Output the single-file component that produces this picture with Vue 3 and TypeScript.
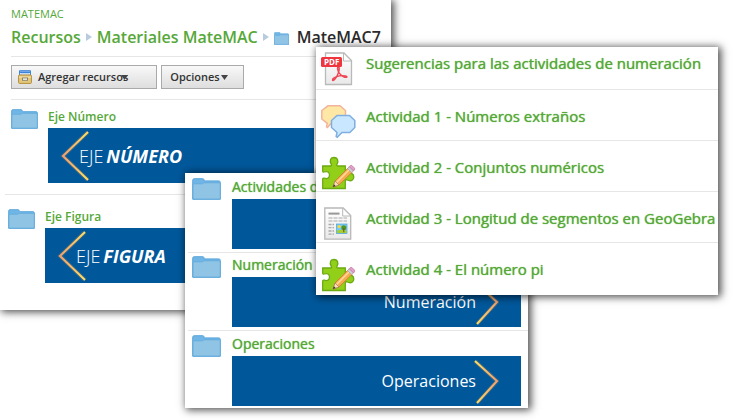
<script setup lang="ts">
interface FolderEntry {
  title: string
  label: string
}
interface Activity {
  icon: 'pdf' | 'chat' | 'puzzle' | 'page'
  title: string
}

const axes: FolderEntry[] = [
  { title: 'Eje Número', label: 'NÚMERO' },
  { title: 'Eje Figura', label: 'FIGURA' },
]
const topics: FolderEntry[] = [
  { title: 'Actividades d', label: '' },
  { title: 'Numeración', label: 'Numeración' },
  { title: 'Operaciones', label: 'Operaciones' },
]
const activities: Activity[] = [
  { icon: 'pdf', title: 'Sugerencias para las actividades de numeración' },
  { icon: 'chat', title: 'Actividad 1 - Números extraños' },
  { icon: 'puzzle', title: 'Actividad 2 - Conjuntos numéricos' },
  { icon: 'page', title: 'Actividad 3 - Longitud de segmentos en GeoGebra' },
  { icon: 'puzzle', title: 'Actividad 4 - El número pi' },
]
</script>

<template>
  <svg class="defs" width="0" height="0" aria-hidden="true">
    <defs>
      <linearGradient id="glow-left" x1="0" x2="1" y1="0" y2="0">
        <stop offset="0" stop-color="#f3a06c" />
        <stop offset="1" stop-color="#ffdf60" />
      </linearGradient>
      <linearGradient id="glow-right" x1="1" x2="0" y1="0" y2="0">
        <stop offset="0" stop-color="#f3a06c" />
        <stop offset="1" stop-color="#ffdf60" />
      </linearGradient>
      <linearGradient id="sheet" x1="0" x2="0" y1="0" y2="1">
        <stop offset="0" stop-color="#ffffff" />
        <stop offset="1" stop-color="#e9e9e9" />
      </linearGradient>
      <symbol id="folder" viewBox="0 0 29 22" preserveAspectRatio="none">
        <path d="M.7 21.3V2.2Q.7.7 2.2.7h8.6q1 0 1.2 1l.3 1.2h14.5q1.5 0 1.5 1.5v16.9z" fill="#6fb6e6" stroke="#5aa5db" />
        <path d="M1 21V6.8q0-1 1-1h8.5l1.5-1h15.3q.9 0 .9.9V21z" fill="#90c4e4" stroke="#5fa9dc" stroke-width=".8" />
      </symbol>
    </defs>
  </svg>

  <main class="board">
    <section class="panel course">
      <header>
        <p class="eyebrow">MATEMAC</p>
        <nav class="crumbs" aria-label="Ruta">
          <a href="#recursos">Recursos</a>
          <svg class="sep" viewBox="0 0 6 8"><path d="M0 0l6 4-6 4z" /></svg>
          <a href="#materiales">Materiales MateMAC</a>
          <svg class="sep" viewBox="0 0 6 8"><path d="M0 0l6 4-6 4z" /></svg>
          <svg class="folder-mini"><use href="#folder" /></svg>
          <strong>MateMAC7</strong>
        </nav>
      </header>
      <div class="toolbar">
        <button type="button" class="tool add">
          <svg class="drawer" viewBox="0 0 14 14">
            <path d="M1.5 5V.7h11V5" fill="#dcecff" stroke="#3d83d8" />
            <path d="M2 2.2h10" stroke="#3d83d8" stroke-width="1.6" />
            <path d="M3 5V4h8v1" fill="#fff" stroke="#8db7e6" stroke-width=".7" />
            <rect x=".6" y="5" width="12.8" height="8.4" rx=".8" fill="#e2c77c" stroke="#b58d3a" />
            <path d="M1 7.1h12" stroke="#f7e7b4" />
            <rect x="4.4" y="8" width="5.2" height="2.2" fill="#fff" stroke="#73715f" stroke-width=".8" />
          </svg>
          <span>Agregar recursos</span>
          <svg class="caret" viewBox="0 0 7 5"><path d="M0 0h7L3.500 5z" /></svg>
        </button>
        <button type="button" class="tool options">
          <span>Opciones</span>
          <svg class="caret" viewBox="0 0 7 5"><path d="M0 0h7L3.500 5z" /></svg>
        </button>
      </div>
      <article v-for="axis in axes" :key="axis.title" class="axis">
        <svg class="folder"><use href="#folder" /></svg>
        <div class="body">
          <a href="#eje">{{ axis.title }}</a>
          <div class="banner axis-banner">
            <svg class="chevron" viewBox="0 0 30 54">
              <path class="halo" d="M28 3L3 27l25 24" />
              <path d="M28 3L3 27l25 24" stroke="url(#glow-left)" />
            </svg>
            <span class="light">EJE</span><em>{{ axis.label }}</em>
          </div>
        </div>
      </article>
    </section>

    <section class="panel topics">
      <article v-for="topic in topics" :key="topic.title" class="topic">
        <svg class="folder"><use href="#folder" /></svg>
        <div class="body">
          <a href="#tema">{{ topic.title }}</a>
          <div class="banner topic-banner">
            <span>{{ topic.label }}</span>
            <svg class="chevron" viewBox="0 0 26 50">
              <path class="halo" d="M2 5l22 20L4 47" />
              <path d="M2 5l22 20L4 47" stroke="url(#glow-right)" />
            </svg>
          </div>
        </div>
      </article>
    </section>

    <section class="panel activities">
      <ul>
        <li v-for="item in activities" :key="item.title">
          <svg v-if="item.icon === 'pdf'" class="kind" viewBox="0 0 36 34">
            <path d="M4.500 1h18.500l7.500 7.500v24h-26z" fill="url(#sheet)" stroke="#b9b9b9" stroke-width="1.300" />
            <path d="M22.500 1v8h8z" fill="#fff" stroke="#b9b9b9" />
            <path d="M12 28.500c2-.7 4.300-4.500 5.600-8.200 1-2.900.8-5.300-.3-5.200-1.400.1-.6 3.900 1 6 2 2.800 6 5 7.500 4.100 1.200-.9-3.200-2.200-7.400-1.300-3.500.7-7.400 2.700-6.900 4.200.1.300.3.400.5.400z" fill="none" stroke="#ef4654" stroke-width="1.400" />
            <rect x="0" y="5" width="21" height="10" rx="1.500" fill="#ee3540" />
            <text x="3" y="13" class="pdf-text">PDF</text>
          </svg>
          <svg v-else-if="item.icon === 'chat'" class="kind" viewBox="0 0 36 34">
            <path d="M7 .8h12l5.500 4.700v8L19 18.500h-9L6.500 22.500l-1-.8.800-3.400L.8 14V5.500z" fill="#ffe8a5" stroke="#f2b49a" stroke-width="1.500" />
            <path d="M16 10.500h12.500l5.300 5v7l-5 5H21l-4.800 4.700-1-.7.800-4-5.500-5v-7z" fill="#c9e8ff" stroke="#7faee0" stroke-width="1.500" />
          </svg>
          <svg v-else-if="item.icon === 'puzzle'" class="kind" viewBox="0 0 36 34">
            <path d="M1.700 10h7.800q1.500 0 .8-1.600C8 4 9.800 1.500 13 1.500s5 2.700 3 6.800q-.8 1.700.8 1.700h7.500v7q0 1.700 1.800.8c4-1.800 6.700.1 6.700 3.200s-2.900 4.800-6.600 3q-1.900-.8-1.900 1v7.500H1.700v-9.500q0-1.200 1.500-.8c3.500 1.300 5.300-.8 5.300-3.300s-2.200-4.200-5.400-2.900q-1.400.5-1.400-1z" fill="#91cf18" stroke="#6caa14" stroke-width="1.300" />
            <path d="M12 31l2-6L27.500 11.500l4.200 4.200L18 29z" fill="#f6ac50" stroke="#c87c31" stroke-width=".8" />
            <path d="M15.500 26.500L29 13" stroke="#ffdca0" stroke-width="1.400" />
            <path d="M12 31l2-6 4 4z" fill="#f7dfb7" stroke="#9c7550" stroke-width=".6" />
            <path d="M12 31l.9-2.700 1.700 1.700z" fill="#333" />
            <path d="M26.500 12.500l2-2 4.200 4.200-2 2z" fill="#cfcfd7" stroke="#9494a3" stroke-width=".5" />
            <path d="M28.200 10.700l1-1q1-.8 2 .1l2 2q1.100 1.200.2 2.100l-1 1z" fill="#e4a0c8" stroke="#bb739d" stroke-width=".7" />
          </svg>
          <svg v-else class="kind" viewBox="0 0 36 34">
            <path d="M3.800 1h18.400l7.500 7.500v23.700H3.800z" fill="url(#sheet)" stroke="#b8b8b8" stroke-width="1.300" />
            <path d="M21.700 1v8h8z" fill="#fff" stroke="#b8b8b8" />
            <path d="M7.500 6.600h11" stroke="#989898" stroke-width="2" />
            <path d="M7.500 11h18.500M7.500 14h18.500" stroke="#a9a9a9" stroke-width="1.200" stroke-dasharray="4 1" />
            <path d="M7.500 17.500h5.500M7.500 20.700h5.500M7.500 24h5.500M7.500 27.200h5.500" stroke="#a9a9a9" stroke-width="1.300" stroke-dasharray="3 1" />
            <rect x="15.500" y="17" width="10.500" height="9.500" fill="#79c9f5" stroke="#4aa3d5" stroke-width=".7" />
            <circle cx="18.200" cy="19.500" r="1.600" fill="#ffd72f" />
            <path d="M16 26v-2.500q3.500-1.500 9.600.2V26z" fill="#a6cf34" />
            <circle cx="22.800" cy="20.700" r="2.500" fill="#519524" />
            <path d="M22.800 21v4.300" stroke="#74501f" />
          </svg>
          <a href="#actividad">{{ item.title }}</a>
        </li>
      </ul>
    </section>
  </main>
</template>

<style>
body {
  background: #fff;
}
</style>

<style scoped>
.defs {
  display: block;
}
.board {
  display: grid;
  /* Shared column lines let the three panels overlap like stacked windows. */
  grid-template-columns:
    minmax(0, 185fr) minmax(0, 131fr) minmax(0, 75fr)
    minmax(0, 137fr) minmax(0, 190fr) minmax(0, 18fr);
  align-items: start;
  overflow: hidden;
  padding-bottom: 12px;
  font-family: "Open Sans", "Noto Sans", sans-serif;
}
.panel {
  grid-row: 1;
  background: #fff;
  box-shadow: 2px 1px 8px 1px rgba(0, 0, 0, 0.7);
  overflow: hidden;
}
.course {
  grid-column: 1 / 4;
  padding-bottom: 27px;
}
.topics {
  grid-column: 2 / 5;
  margin-top: 173px;
  padding-bottom: 2px;
}
.activities {
  grid-column: 3 / 6;
  margin-top: 47px;
}
a {
  color: #56a839;
  font-weight: 600;
  text-decoration: none;
  white-space: nowrap;
}
.folder {
  flex: none;
}
header {
  margin-left: 11px;
  padding: 6px 0 8px;
  border-bottom: 1px solid #e6e6e6;
}
.eyebrow {
  margin: 0;
  color: #56a839;
  font-size: 11px;
  line-height: 16px;
}
.crumbs {
  display: flex;
  align-items: center;
  margin-top: 4px;
  font-size: 16px;
  line-height: 22px;
  white-space: nowrap;
}
.crumbs strong {
  color: #2b2b2b;
  font-weight: 600;
}
.sep {
  flex: none;
  width: 6px;
  height: 8px;
  margin: 0 5px;
  fill: #b9cbdf;
}
.folder-mini {
  flex: none;
  width: 15px;
  height: 13px;
  margin: 2px 8px 0 0;
}
.toolbar {
  display: flex;
  gap: 4px;
  margin-left: 11px;
  padding: 8px 0 10px;
  border-bottom: 1px solid #e6e6e6;
}
.tool {
  display: flex;
  align-items: center;
  height: 24px;
  border: 1px solid #aaa;
  background: linear-gradient(#f8f8f8, #dedede);
  color: #333;
  font: 600 11px/16px "Open Sans", sans-serif;
  white-space: nowrap;
}
.add {
  padding: 0 28px 0 6px;
}
.options {
  padding: 0 15px 0 8px;
}
.drawer {
  width: 14px;
  height: 14px;
  margin-right: 6px;
}
.caret {
  width: 7px;
  height: 5px;
  fill: #444;
}
.add .caret {
  margin-left: -7px;
}
.options .caret {
  margin-left: 1px;
}
.axis {
  display: flex;
  align-items: flex-start;
  gap: 10px;
  padding: 9px 0 11px 11px;
}
.axis + .axis {
  margin-left: 5px;
  padding: 14px 0 0 3px;
  border-top: 1px solid #e6e6e6;
}
.axis .folder {
  width: 27px;
  height: 20px;
}
.body {
  flex: 1;
  min-width: 0;
}
.axis .body {
  margin-right: 77px;
}
.axis a {
  display: block;
  font-size: 12px;
  line-height: 16px;
  margin-bottom: 3px;
}
.banner {
  display: flex;
  align-items: center;
  background: #00589b;
  color: #fff;
}
.axis-banner {
  height: 55px;
  padding-left: 12px;
  font-size: 18px;
  line-height: 24px;
}
.chevron {
  flex: none;
  fill: none;
  stroke-width: 2;
}
.halo {
  stroke: #ff9c4d;
  stroke-width: 4;
  stroke-opacity: 0.2;
}
.axis-banner .chevron {
  width: 30px;
  height: 54px;
  margin-right: -11px;
}
.light {
  font-weight: 300;
}
.axis-banner em {
  margin-left: 3px;
  font-weight: 700;
}
.topic {
  display: flex;
  align-items: flex-start;
  gap: 11px;
  margin-left: 3px;
  padding: 3px 7px 3px 4px;
}
.topic:first-child {
  padding-top: 5px;
}
.topic:last-child {
  padding: 4px 7px 0 4px;
}
.topic + .topic {
  border-top: 1px solid #e6e6e6;
}
.topic .folder {
  width: 29px;
  height: 22px;
}
.topic a {
  display: block;
  font-size: 14px;
  line-height: 18px;
  margin-bottom: 3px;
}
.topic a,
.activities a {
  font-weight: 400;
  text-shadow: 0 0 1px #56a839;
}
.topic-banner {
  justify-content: flex-end;
  height: 50px;
  padding-right: 22px;
  font-size: 16px;
}
.topic-banner .chevron {
  width: 26px;
  height: 50px;
  margin-left: -3px;
}
.activities ul {
  margin: 0;
  padding: 0;
  list-style: none;
}
.activities li {
  display: flex;
  align-items: flex-start;
  gap: 9px;
  padding: 15px 0 1px 5px;
  border-bottom: 1px solid #e6e6e6;
}
.activities li:first-child {
  padding: 5px 0 3px 5px;
}
.activities li:last-child {
  border-bottom: 0;
  padding-bottom: 3px;
}
.kind {
  flex: none;
  width: 36px;
  height: 34px;
}
.activities a {
  font-size: 15px;
  line-height: 22px;
}
.pdf-text {
  fill: #fff;
  font: 700 8px "Open Sans", sans-serif;
}
</style>
